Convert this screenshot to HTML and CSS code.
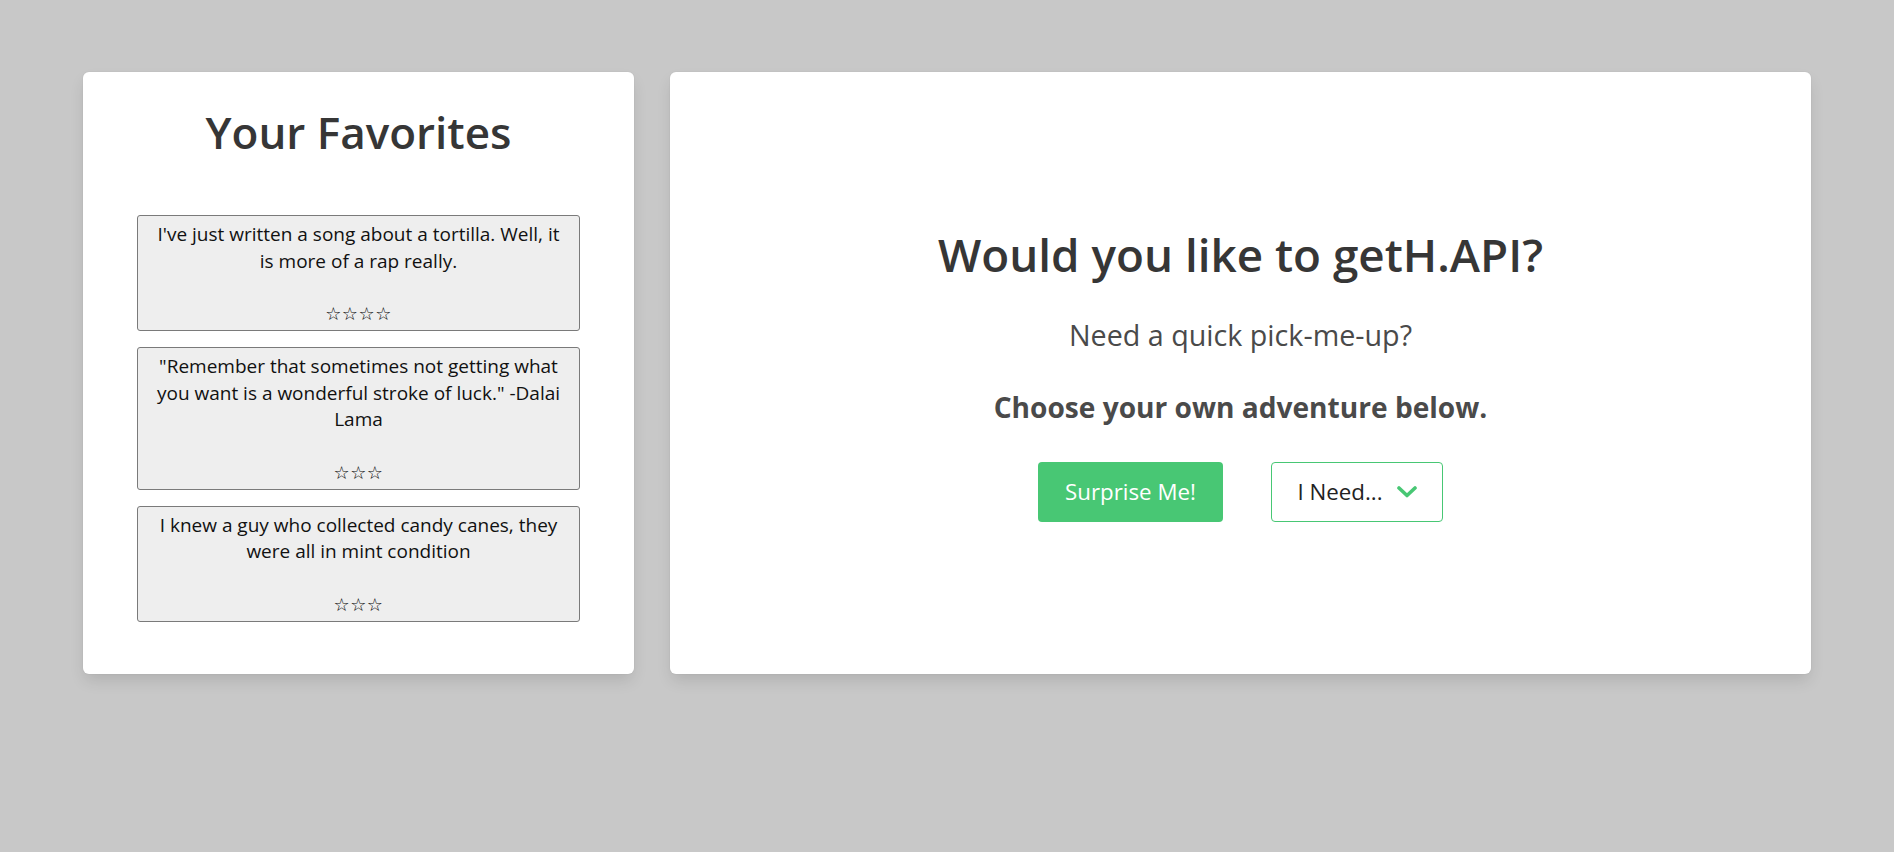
FILE: index.html
```html
<!DOCTYPE html>
<html lang="en">
<head>
<meta charset="utf-8">
<title>getH.API</title>
<link rel="stylesheet" href="styles.css">
</head>
<body>
<main class="page">
  <section class="card favorites">
    <h1 class="title fav-title">Your Favorites</h1>
    <div class="fav-list">
      <div class="fav">
        <p class="fav-text">I've just written a song about a tortilla. Well, it is more of a rap really.</p>
        <p class="fav-rating">☆☆☆☆</p>
      </div>
      <div class="fav">
        <p class="fav-text">"Remember that sometimes not getting what you want is a wonderful stroke of luck." -Dalai Lama</p>
        <p class="fav-rating">☆☆☆</p>
      </div>
      <div class="fav">
        <p class="fav-text">I knew a guy who collected candy canes, they were all in mint condition</p>
        <p class="fav-rating">☆☆☆</p>
      </div>
    </div>
  </section>
  <section class="card hero">
    <h2 class="title big">Would you like to getH.API?</h2>
    <p class="subtitle">Need a quick pick-me-up?</p>
    <p class="prompt">Choose your own adventure below.</p>
    <div class="actions">
      <button class="btn btn-success">Surprise Me!</button>
      <button class="btn btn-outline"><span>I Need...</span>
        <svg class="chev" viewBox="0 0 20 12" width="20" height="12" aria-hidden="true"><path d="M2 2 L10 9.5 L18 2" fill="none" stroke="#48c774" stroke-width="3.6" stroke-linecap="round" stroke-linejoin="round"/></svg>
      </button>
    </div>
  </section>
</main>
</body>
</html>
```

FILE: styles.css
```css
* { box-sizing: border-box; }
html, body { margin: 0; padding: 0; }
body {
  background: #c8c8c8;
  font-family: "Open Sans", "Noto Sans", Arial, sans-serif;
  color: #4a4a4a;
  height: 852px;
}
.page {
  display: grid;
  grid-template-columns: 551fr 1141fr;
  column-gap: 36px;
  padding: 72px 83px 0;
  align-items: stretch;
}
.card {
  background: #fff;
  border-radius: 6px;
  box-shadow: 0 8px 16px -2px rgba(10,10,10,0.12), 0 0 0 1px rgba(10,10,10,0.02);
}
.favorites {
  padding: 33px 54px 52px;
}
.title {
  margin: 0;
  color: #363636;
  font-weight: 600;
  line-height: 54px;
  text-align: center;
}
.fav-title { font-size: 44px; }
.fav-list {
  margin-top: 56px;
  display: flex;
  flex-direction: column;
  gap: 16px;
}
.fav {
  background: #eeeeee;
  border: 1px solid #7a7a7a;
  border-radius: 3px;
  padding: 5px 15px 2.33px;
  text-align: center;
  color: #111;
  font-size: 19px;
  line-height: 26.67px;
}
.fav p { margin: 0; }
.fav .fav-rating {
  margin-top: 26.67px;
  font-family: "DejaVu Sans", sans-serif;
  font-size: 18px;
  letter-spacing: 0.5px;
  color: #000;
}
.hero {
  display: flex;
  flex-direction: column;
  align-items: center;
  justify-content: center;
  padding-top: 3px;
}
.big { font-size: 45.8px; }
.subtitle {
  margin: 36px 0 0;
  font-size: 28.7px;
  line-height: 36px;
  color: #4a4a4a;
}
.prompt {
  margin: 36.5px 0 0;
  font-size: 28.1px;
  line-height: 36px;
  font-weight: 700;
  color: #4a4a4a;
}
.actions {
  margin-top: 36.6px;
  display: flex;
  gap: 48px;
}
.btn {
  height: 60px;
  border-radius: 4px;
  font-family: inherit;
  font-size: 22.3px;
  display: flex;
  align-items: center;
  justify-content: center;
  cursor: pointer;
  padding: 0;
}
.btn-success {
  width: 185px;
  background: #48c774;
  border: 1px solid transparent;
  color: #fff;
}
.btn-outline {
  width: 172px;
  background: #fff;
  border: 1px solid #48c774;
  color: #222;
  gap: 14px;
}
.chev { display: block; }
```
